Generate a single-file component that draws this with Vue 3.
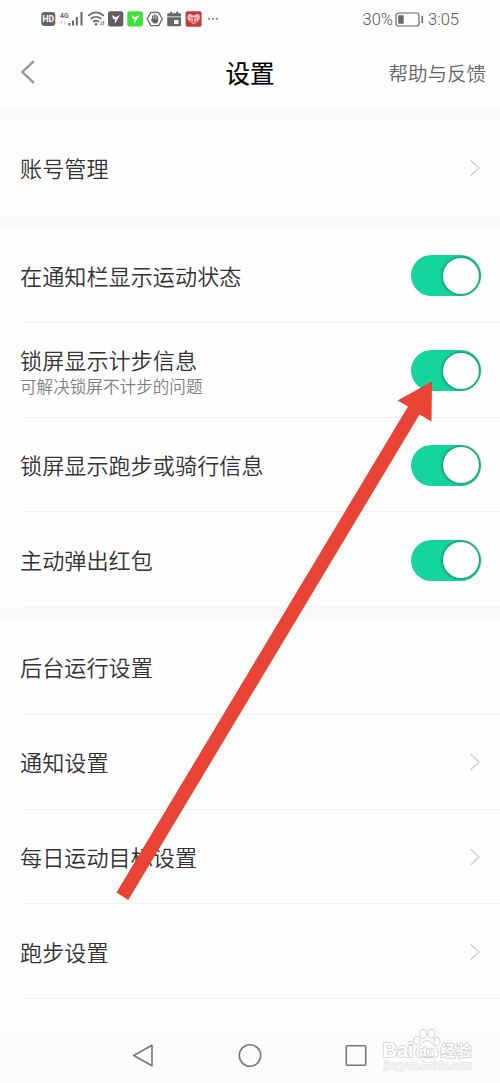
<script setup>
const groups = [
  { id: 'account', rows: [{ title: '账号管理', type: 'link' }] },
  {
    id: 'switches',
    rows: [
      { title: '在通知栏显示运动状态', type: 'switch' },
      { title: '锁屏显示计步信息', note: '可解决锁屏不计步的问题', type: 'switch' },
      { title: '锁屏显示跑步或骑行信息', type: 'switch' },
      { title: '主动弹出红包', type: 'switch' },
    ],
  },
  {
    id: 'more',
    rows: [
      { title: '后台运行设置', type: 'plain' },
      { title: '通知设置', type: 'link' },
      { title: '每日运动目标设置', type: 'link' },
      { title: '跑步设置', type: 'link' },
    ],
  },
]
</script>

<template>
  <div class="screen">
    <header class="status">
      <svg class="status-icons" width="190" height="22" viewBox="40 8 190 22">
        <!-- HD -->
        <rect x="41.3" y="12" width="14" height="14" rx="3" fill="#666" />
        <text x="48.3" y="22.3" class="hd">HD</text>
        <!-- mobile signal -->
        <text x="60" y="18" class="net" textLength="8.5" lengthAdjust="spacingAndGlyphs">4G</text>
        <path d="M61.500 24.500V21M60.500 22.300l1-1.300 1 1.300M65 21v3.500M64 23.200l1 1.300 1-1.300" stroke="#ccc" stroke-width=".9" fill="none" />
        <path d="M69.300 23v2.500M73 20.500v5M76.800 17v8.500M81.500 12v13.500" stroke="#666" stroke-width="2" />
        <!-- wifi -->
        <g fill="none" stroke="#666" stroke-width="1.700" stroke-linecap="round">
          <path d="M88.700 15.300q7.300-5.800 14.600 0" />
          <path d="M91.300 18.600q4.700-3.700 9.400 0" />
          <path d="M93.700 21.500q2.300-1.800 4.600 0" />
        </g>
        <circle cx="96" cy="24.200" r="1.300" fill="#666" />
        <path d="M101.200 21.500v3.700M100.200 24l1 1.200 1-1.200M103.500 25.200v-3.700M102.500 22.700l1-1.200 1 1.200" stroke="#777" stroke-width=".8" fill="none" />
        <!-- app badges -->
        <rect x="108" y="11.300" width="15.300" height="15.300" rx="2.500" fill="#5f5f5f" />
        <path d="M112 15l3.800 2.200 4.200-2.200-5.200 8.700.3-4.200-2.100-.9z" fill="#fff" />
        <rect x="127.300" y="11.300" width="15.600" height="15.300" rx="2.500" fill="#3be33b" />
        <path d="M131.500 15l3.800 2.200 4.200-2.200-5.200 8.700.3-4.200-2.100-.9z" fill="#fff" />
        <!-- hand in hexagon -->
        <path d="M151 12.300h7.500l3.900 6.700-3.900 6.700H151L147.200 19z" fill="#fff" stroke="#666" stroke-width="1.300" stroke-linejoin="round" />
        <path d="M152.600 20v-4M154.300 20v-5.300M156 20v-5M157.500 20v-3.500M151.300 19.500l1.500 2" stroke="#666" stroke-width="1.200" stroke-linecap="round" fill="none" />
        <path d="M152 19h6.100v2.500l-1.500 2h-2.800l-1.800-2z" fill="#666" />
        <!-- calendar -->
        <path d="M168.500 13.300h1.700v-1.500h2v1.500h4v-1.500h2v1.500h1.500q1.300 0 1.300 1.300v1.800h-13.800v-1.800q0-1.300 1.300-1.300z" fill="#666" />
        <path d="M167.200 17.300H181v7.500q0 1.500-1.500 1.500h-10.800q-1.500 0-1.500-1.500z" fill="#666" />
        <rect x="174" y="20" width="4.500" height="4" fill="#fff" />
        <!-- red app -->
        <rect x="185.600" y="11.300" width="16" height="15.500" rx="1.800" fill="#c8383d" />
        <path d="M188 14.500q2.500-1.500 5.600 1.200 3.100-2.700 5.600-1.200 1.500 4-1 6.500l-4.600 3.500-4.600-3.500q-2.500-2.500-1-6.500z" fill="#f1c4c5" />
        <path d="M189.500 17l2 1.700 2-1.200 2.200 1.200 2-1.700M190 20.500l2 .8 1.600 2 1.600-2 2-.8M193.600 17.500v5" stroke="#c8383d" stroke-width=".9" fill="none" />
        <g fill="#777"><circle cx="209" cy="18.800" r="1" /><circle cx="213" cy="18.800" r="1" /><circle cx="217" cy="18.800" r="1" /></g>
      </svg>
      <div class="status-right">
        <span>30%</span>
        <svg width="29" height="16" viewBox="0 0 29 16">
          <rect x="1" y="1" width="23" height="13" rx="2.500" fill="none" stroke="#666" stroke-width="1.200" />
          <rect x="3.200" y="3.200" width="5.500" height="8.600" rx=".7" fill="#666" />
          <path d="M27.300 4v7" stroke="#666" stroke-width="1.500" />
        </svg>
        <span>3:05</span>
      </div>
    </header>

    <nav class="bar">
      <svg class="back" width="18" height="26" viewBox="0 0 18 26">
        <path d="M13.800 2.200L2.400 13l11.400 10.800" fill="none" stroke="#959595" stroke-width="2.300" />
      </svg>
      <h1>设置</h1>
      <a class="help">帮助与反馈</a>
    </nav>

    <main>
      <section v-for="group in groups" :key="group.id" :class="['group', group.id]">
        <div v-for="row in group.rows" :key="row.title" class="row">
          <div class="label">
            <div class="title">{{ row.title }}</div>
            <div v-if="row.note" class="note">{{ row.note }}</div>
          </div>
          <div v-if="row.type === 'switch'" class="switch"><i></i></div>
          <svg v-else-if="row.type === 'link'" class="chevron" width="12" height="20" viewBox="0 0 12 20">
            <path d="M1.500 2L10 10l-8.500 8" fill="none" stroke="#d2d2d2" stroke-width="1.400" />
          </svg>
        </div>
      </section>
    </main>

    <footer class="keys">
      <svg width="24" height="26" viewBox="0 0 24 26">
        <path d="M20 2.300v20.400L1.700 12.500z" fill="none" stroke="#777" stroke-width="1.600" stroke-linejoin="round" />
      </svg>
      <svg width="26" height="26" viewBox="0 0 26 26">
        <circle cx="13" cy="12.500" r="10.700" fill="none" stroke="#777" stroke-width="1.600" />
      </svg>
      <svg width="24" height="26" viewBox="0 0 24 26">
        <rect x="2.300" y="2.800" width="19.400" height="19.400" rx="1" fill="none" stroke="#777" stroke-width="1.600" />
      </svg>
    </footer>

    <svg class="pointer" width="320" height="524" viewBox="114 379 320 524">
      <path d="M432 381.500L397.500 400.500 408 406.500 116.500 892.500 128.300 900 419.500 414.500 431.500 421.500z" fill="#e94335" />
    </svg>

    <svg class="watermark" width="100" height="52" viewBox="378 1024 100 52">
      <text x="382.500" y="1057" class="wm-brand" textLength="31">Bai</text>
      <g fill="#fff" stroke="#cfcfcf" stroke-width="1">
        <ellipse cx="416.800" cy="1040.500" rx="3" ry="4.200" />
        <ellipse cx="423.300" cy="1033.800" rx="3.400" ry="4.400" />
        <ellipse cx="431.500" cy="1033.800" rx="3.400" ry="4.400" />
        <ellipse cx="437" cy="1041.500" rx="3" ry="4.200" />
        <path d="M427 1040.500q3.500 0 5.500 3.700 6 4.500 5.800 9-.5 5-6 4.700-5.300-.8-10.600 0-5.500.3-6-4.700-.2-4.500 5.800-9 2-3.700 5.500-3.700z" />
      </g>
      <text x="418.800" y="1055.500" class="wm-du" textLength="15.500">du</text>
      <text x="440.500" y="1056" class="wm-cn" textLength="31">经验</text>
      <text x="384" y="1069" class="wm-url" textLength="88">jingyan.baidu.com</text>
    </svg>
  </div>
</template>

<style>
body {
  margin: 0;
}
</style>

<style scoped>
.screen {
  position: relative;
  width: 500px;
  height: 1083px;
  overflow: hidden;
  display: flex;
  flex-direction: column;
  background: #fefefe;
  font-family: "Noto Sans CJK SC", sans-serif;
  color: #333;
}
.status {
  height: 38px;
  box-sizing: border-box;
  flex: none;
  display: flex;
  justify-content: space-between;
  padding: 8px 41px 0 40px;
}
.status-right {
  display: flex;
  align-items: center;
  height: 23px;
  gap: 2px;
  font: 16.5px/23px Roboto, sans-serif;
  font-weight: 300;
  color: #555;
}
.status-right svg {
  margin-right: 2px;
}
.hd {
  font: bold 8.5px Roboto, sans-serif;
  fill: #fff;
  text-anchor: middle;
}
.net {
  font: bold 8px Roboto, sans-serif;
  fill: #666;
}
.bar {
  height: 70px;
  flex: none;
  display: grid;
  grid-template-columns: 1fr auto 1fr;
  align-items: center;
  padding: 0 14px 0 20px;
}
.back {
  margin-top: -2px;
}
h1 {
  margin: 0 0 0 -6px;
  font-size: 24.5px;
  line-height: 36px;
  font-weight: 400;
  color: #000;
  -webkit-text-stroke: 0.2px #000;
}
.help {
  justify-self: end;
  font-size: 19.5px;
  line-height: 30px;
  font-weight: 350;
  color: #666;
}
main {
  flex: none;
  height: 920px;
  background: #fafafa;
}
.group {
  background: #fefefe;
  position: relative;
  display: flex;
  flex-direction: column;
}
.account {
  margin-top: 12px;
  height: 96px;
}
.switches {
  margin-top: 12px;
  height: 379px;
}
.more {
  margin-top: 13px;
  height: 379px;
  padding-bottom: 29px;
}
.row {
  flex: 1;
  box-sizing: border-box;
  display: flex;
  align-items: center;
  justify-content: space-between;
  padding: 0 20px 0 20px;
  background: linear-gradient(#f2f2f2, #f2f2f2) 24px 100% / 476px 1px no-repeat;
}
.account .row {
  background: none;
}
.title {
  font-size: 22.15px;
  line-height: 32px;
  font-weight: 350;
  margin-top: -2px;
}
.switches .title {
  margin-top: -1px;
}
.note {
  margin-top: 1px;
  font-size: 16.6px;
  line-height: 20px;
  font-weight: 350;
  color: #808080;
}
.switch {
  width: 70px;
  height: 41px;
  box-sizing: border-box;
  margin: 1px -1px 0 0;
  padding: 2.500px;
  border-radius: 21px;
  background: #14d59b;
  display: flex;
  justify-content: flex-end;
}
.switch i {
  width: 36px;
  height: 36px;
  border-radius: 50%;
  background: #fefefe;
  box-shadow: 0 0 3px 1px rgba(20, 85, 65, 0.6);
}
.chevron {
  margin-right: -1px;
}
.keys {
  flex: 1;
  display: flex;
  align-items: center;
  justify-content: space-between;
  padding: 0 132px;
  background: #fcfcfc;
}
.pointer {
  position: absolute;
  left: 114px;
  top: 379px;
}
.watermark {
  position: absolute;
  left: 378px;
  top: 1024px;
}
.watermark text {
  fill: #fff;
  stroke: #cdcdcd;
  stroke-width: 1.5px;
  paint-order: stroke;
}
.watermark .wm-brand {
  font: bold 20px "Liberation Sans", sans-serif;
}
.watermark .wm-du {
  font: bold 13px "Liberation Sans", sans-serif;
}
.watermark .wm-cn {
  font: bold 15px "Noto Sans CJK SC", sans-serif;
}
.watermark .wm-url {
  font: 11px "Liberation Sans", sans-serif;
  stroke: #e2e2e2;
}
</style>
